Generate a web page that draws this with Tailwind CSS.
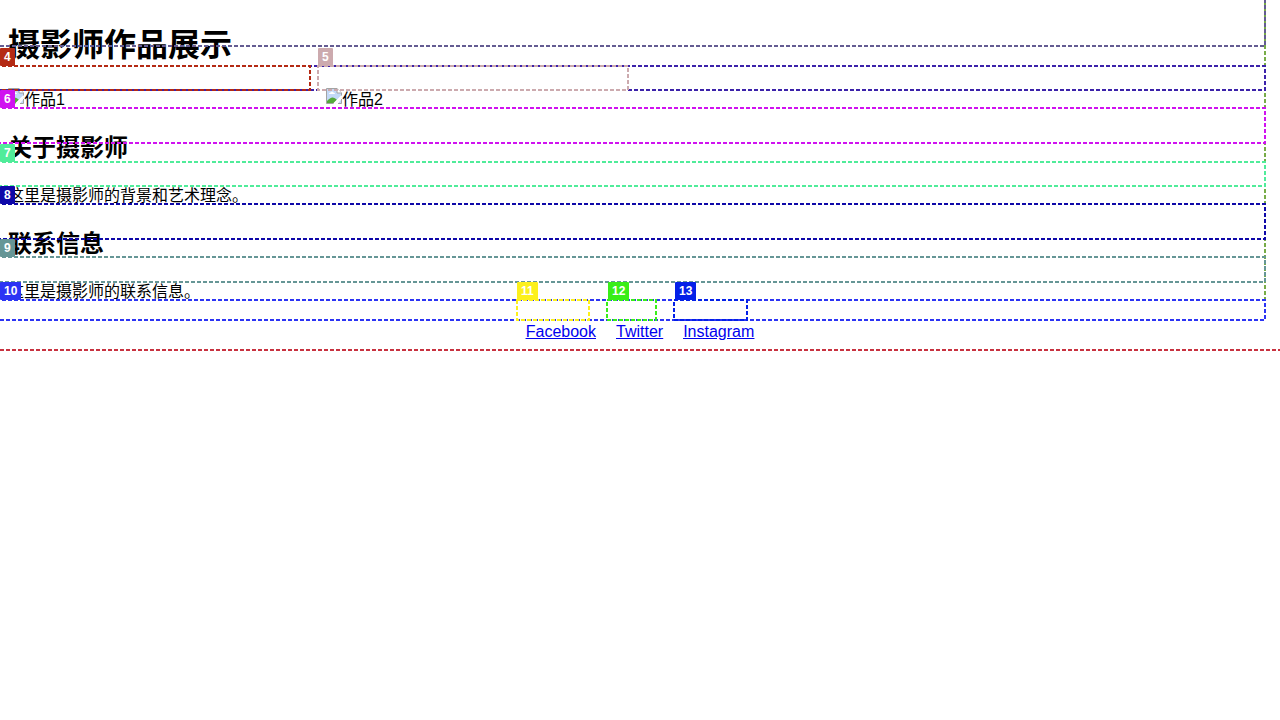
<!DOCTYPE html>
<html lang="zh-CN">
<head>
<meta charset="utf-8">
<title>摄影师作品展示</title>
<script src="https://cdn.jsdelivr.net/npm/@tailwindcss/browser@4"></script>
</head>
<body class="bg-white text-black text-base font-['Liberation_Sans','Noto_Sans_CJK_SC',sans-serif]">
<div class="px-2 pt-[21px] pb-2">
  <header><h1 class="text-[32px] leading-12 font-bold">摄影师作品展示</h1></header>
  <main>
    <section class="mt-[19px] grid grid-cols-4 gap-2 leading-6">
      <div class="flex">
        <svg class="w-4 h-4 shrink-0" viewBox="0 0 16 16" aria-hidden="true"><path d="M.5 15.500V.5H11l4.500 4.500v4L9 15.500z" fill="#c3d9f7" stroke="#a3a3a3"/><path d="M11 .5V5h4.500" fill="#fff" stroke="#a3a3a3"/><path d="M3 6q0-1.500 1.500-1.500Q6 2.500 7.500 4.500 9 4.500 9 6z" fill="#fff"/><path d="M1 15v-2q5-6 9-2l1 1-3 3z" fill="#55a83a"/><path d="M8 16l8-8" stroke="#fff" stroke-width="2"/><path d="M12 15.500h3.500V11" fill="#c3d9f7" stroke="#a3a3a3"/></svg>
        <span>作品1</span>
      </div>
      <div class="flex">
        <svg class="w-4 h-4 shrink-0" viewBox="0 0 16 16" aria-hidden="true"><path d="M.5 15.500V.5H11l4.500 4.500v4L9 15.500z" fill="#c3d9f7" stroke="#a3a3a3"/><path d="M11 .5V5h4.500" fill="#fff" stroke="#a3a3a3"/><path d="M3 6q0-1.500 1.500-1.500Q6 2.500 7.500 4.500 9 4.500 9 6z" fill="#fff"/><path d="M1 15v-2q5-6 9-2l1 1-3 3z" fill="#55a83a"/><path d="M8 16l8-8" stroke="#fff" stroke-width="2"/><path d="M12 15.500h3.500V11" fill="#c3d9f7" stroke="#a3a3a3"/></svg>
        <span>作品2</span>
      </div>
    </section>
    <section class="mt-[18px]">
      <h2 class="text-2xl leading-9 font-bold">关于摄影师</h2>
      <p class="mt-5 leading-5">这里是摄影师的背景和艺术理念。</p>
    </section>
    <section class="mt-5">
      <h2 class="text-2xl leading-9 font-bold">联系信息</h2>
      <p class="mt-5 leading-5">这里是摄影师的联系信息。</p>
    </section>
    <nav class="mt-5 flex justify-center gap-5 leading-5 text-[#0000ee] underline">
      <a href="#facebook">Facebook</a><a href="#twitter">Twitter</a><a href="#instagram">Instagram</a>
    </nav>
  </main>
</div>

<!-- Element outlines and their number tags -->
<div class="absolute inset-x-0 top-0 h-[351px] overflow-hidden pointer-events-none text-xs font-bold text-white">
  <svg class="absolute inset-0 w-full h-full" fill="none" stroke-width="2" stroke-dasharray="4 2" aria-hidden="true">
    <rect x="-10" y="-10" height="360" class="w-[calc(100%+20px)]" stroke="#c83240"/>
    <rect x="-10" y="-12" height="332" class="w-[calc(100%-5px)]" stroke="#78ac48"/>
    <rect x="-10" y="-10" height="56" class="w-[calc(100%-5px)]" stroke="#645c92"/>
    <rect x="-10" y="66" height="24" class="w-[calc(100%-5px)]" stroke="#3c22aa"/>
    <rect x="-10" y="66" height="24" width="320" stroke="#b42a14"/>
    <rect x="318" y="66" height="24" width="310" stroke="#ccaaae"/>
    <rect x="-10" y="108" height="35" class="w-[calc(100%-5px)]" stroke="#d012f0"/>
    <rect x="-10" y="162" height="24" class="w-[calc(100%-5px)]" stroke="#50ec9a"/>
    <rect x="-10" y="204" height="35" class="w-[calc(100%-5px)]" stroke="#0e08a8"/>
    <rect x="-10" y="257" height="25" class="w-[calc(100%-5px)]" stroke="#669696"/>
    <rect x="-10" y="300" height="20" class="w-[calc(100%-5px)]" stroke="#2c34f4"/>
    <rect x="517" y="300" height="20" width="72" stroke="#fcf01c"/>
    <rect x="607" y="300" height="20" width="49" stroke="#38ee18"/>
    <rect x="674" y="300" height="20" width="73" stroke="#0420e8"/>
  </svg>
  <span class="absolute left-0 top-12 px-1 leading-[18px] rounded-[1px] bg-[#b42a14]">4</span>
  <span class="absolute left-[318px] top-12 px-1 leading-[18px] rounded-[1px] bg-[#ccaaae]">5</span>
  <span class="absolute left-0 top-[90px] px-1 leading-[18px] rounded-[1px] bg-[#d012f0]">6</span>
  <span class="absolute left-0 top-36 px-1 leading-[18px] rounded-[1px] bg-[#50ec9a]">7</span>
  <span class="absolute left-0 top-[186px] px-1 leading-[18px] rounded-[1px] bg-[#0e08a8]">8</span>
  <span class="absolute left-0 top-[239px] px-1 leading-[18px] rounded-[1px] bg-[#669696]">9</span>
  <span class="absolute left-0 top-[282px] px-1 leading-[18px] rounded-[1px] bg-[#2c34f4]">10</span>
  <span class="absolute left-[517px] top-[282px] px-1 leading-[18px] rounded-[1px] bg-[#fcf01c]">11</span>
  <span class="absolute left-[608px] top-[282px] px-1 leading-[18px] rounded-[1px] bg-[#38ee18]">12</span>
  <span class="absolute left-[675px] top-[282px] px-1 leading-[18px] rounded-[1px] bg-[#0420e8]">13</span>
</div>
</body>
</html>
